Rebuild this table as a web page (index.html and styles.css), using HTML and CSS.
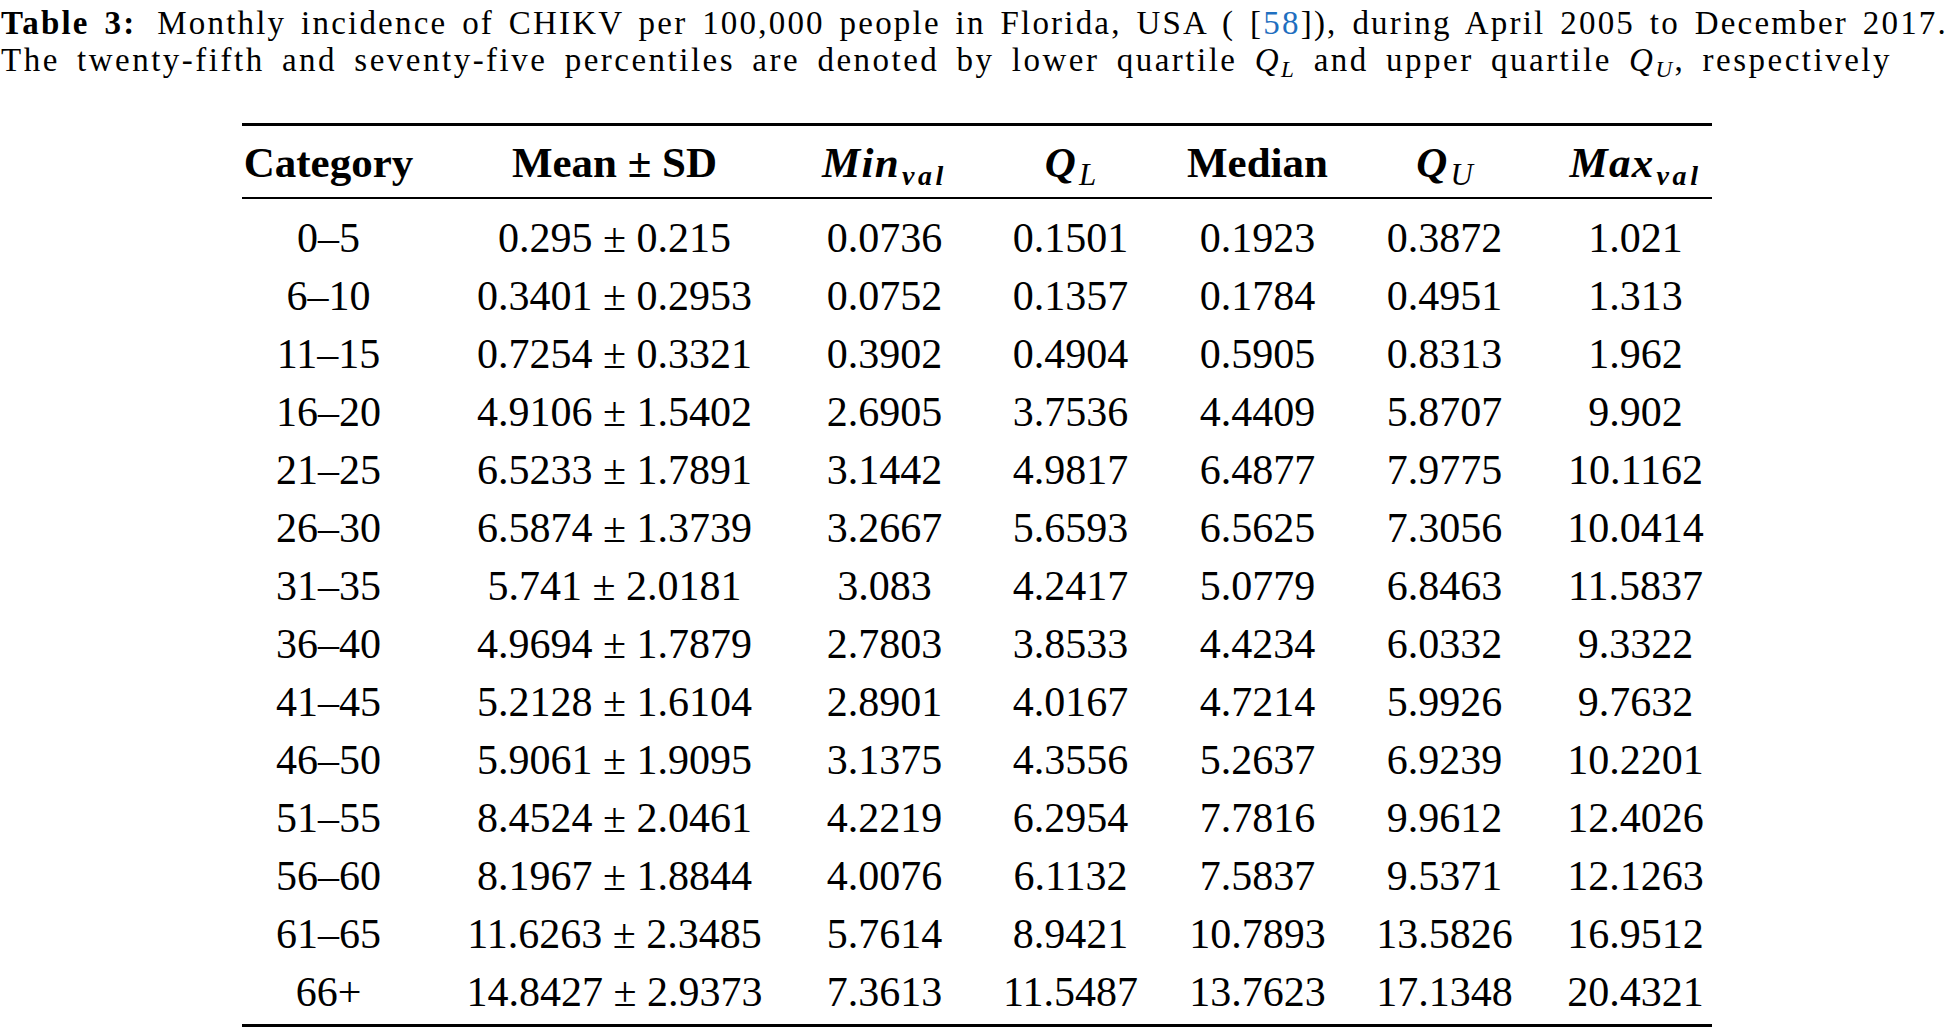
FILE: index.html
```html
<!DOCTYPE html>
<html lang="en">
<head>
<meta charset="utf-8">
<title>Table 3</title>
<link rel="stylesheet" href="styles.css">
</head>
<body>
<div class="caption">
  <div class="caption-line first"><span class="label">Table 3:</span> Monthly incidence of CHIKV per 100,000 people in Florida, USA ( [<span class="cite">58</span>]), during April 2005 to December 2017.</div>
  <div class="caption-line second">The twenty-fifth and seventy-five percentiles are denoted by lower quartile <span class="mi">Q<span class="sub">L</span></span> and upper quartile <span class="mi">Q<span class="sub">U</span></span>, respectively</div>
</div>
<table class="data">
  <colgroup>
    <col class="c-cat"><col class="c-mean"><col class="c-min"><col class="c-ql"><col class="c-med"><col class="c-qu"><col class="c-max">
  </colgroup>
  <thead>
    <tr>
      <th>Category</th>
      <th>Mean ± SD</th>
      <th><span class="mb">Min<span class="sub">val</span></span></th>
      <th><span class="mb">Q<span class="sub sub-reg">L</span></span></th>
      <th>Median</th>
      <th><span class="mb">Q<span class="sub sub-reg">U</span></span></th>
      <th><span class="mb">Max<span class="sub">val</span></span></th>
    </tr>
  </thead>
  <tbody>
    <tr><td>0–5</td><td>0.295 ± 0.215</td><td>0.0736</td><td>0.1501</td><td>0.1923</td><td>0.3872</td><td>1.021</td></tr>
    <tr><td>6–10</td><td>0.3401 ± 0.2953</td><td>0.0752</td><td>0.1357</td><td>0.1784</td><td>0.4951</td><td>1.313</td></tr>
    <tr><td>11–15</td><td>0.7254 ± 0.3321</td><td>0.3902</td><td>0.4904</td><td>0.5905</td><td>0.8313</td><td>1.962</td></tr>
    <tr><td>16–20</td><td>4.9106 ± 1.5402</td><td>2.6905</td><td>3.7536</td><td>4.4409</td><td>5.8707</td><td>9.902</td></tr>
    <tr><td>21–25</td><td>6.5233 ± 1.7891</td><td>3.1442</td><td>4.9817</td><td>6.4877</td><td>7.9775</td><td>10.1162</td></tr>
    <tr><td>26–30</td><td>6.5874 ± 1.3739</td><td>3.2667</td><td>5.6593</td><td>6.5625</td><td>7.3056</td><td>10.0414</td></tr>
    <tr><td>31–35</td><td>5.741 ± 2.0181</td><td>3.083</td><td>4.2417</td><td>5.0779</td><td>6.8463</td><td>11.5837</td></tr>
    <tr><td>36–40</td><td>4.9694 ± 1.7879</td><td>2.7803</td><td>3.8533</td><td>4.4234</td><td>6.0332</td><td>9.3322</td></tr>
    <tr><td>41–45</td><td>5.2128 ± 1.6104</td><td>2.8901</td><td>4.0167</td><td>4.7214</td><td>5.9926</td><td>9.7632</td></tr>
    <tr><td>46–50</td><td>5.9061 ± 1.9095</td><td>3.1375</td><td>4.3556</td><td>5.2637</td><td>6.9239</td><td>10.2201</td></tr>
    <tr><td>51–55</td><td>8.4524 ± 2.0461</td><td>4.2219</td><td>6.2954</td><td>7.7816</td><td>9.9612</td><td>12.4026</td></tr>
    <tr><td>56–60</td><td>8.1967 ± 1.8844</td><td>4.0076</td><td>6.1132</td><td>7.5837</td><td>9.5371</td><td>12.1263</td></tr>
    <tr><td>61–65</td><td>11.6263 ± 2.3485</td><td>5.7614</td><td>8.9421</td><td>10.7893</td><td>13.5826</td><td>16.9512</td></tr>
    <tr><td>66+</td><td>14.8427 ± 2.9373</td><td>7.3613</td><td>11.5487</td><td>13.7623</td><td>17.1348</td><td>20.4321</td></tr>
  </tbody>
</table>
</body>
</html>
```
FILE: styles.css
```css
html, body {
  margin: 0;
  padding: 0;
  background: #ffffff;
  overflow: hidden;
}

body {
  font-family: "Liberation Serif", "Times New Roman", serif;
  color: #000000;
}

.caption {
  padding: 5px 5px 0 1px;
  font-size: 33px;
  line-height: 36.7px;
}

.caption-line.first {
  text-align: justify;
  text-align-last: justify;
  letter-spacing: 2.2px;
}

.caption-line.second {
  text-align: left;
  letter-spacing: 2.5px;
  word-spacing: 6.5px;
}

.label {
  font-weight: bold;
  margin-right: 6px;
}

.cite {
  color: #1f6fc0;
}

.mi {
  font-style: italic;
}

.sub {
  font-size: 0.7em;
  line-height: 0;
  vertical-align: -6px;
}

.data {
  table-layout: fixed;
  width: 1470px;
  margin: 44.6px auto 0;
  border-collapse: separate;
  border-spacing: 0;
}

.c-cat { width: 174px; }
.c-mean { width: 398px; }
.c-min { width: 142px; }
.c-ql { width: 230px; }
.c-med { width: 144px; }
.c-qu { width: 230px; }
.c-max { width: 152px; }

.data th {
  font-size: 43px;
  font-weight: bold;
  line-height: 68px;
  padding: 3px 0 0;
  text-align: center;
  white-space: nowrap;
  border-top: 3px solid #000000;
  border-bottom: 2px solid #000000;
}

.mb {
  font-style: italic;
  font-weight: bold;
  letter-spacing: 0.03em;
}

.mb .sub {
  font-size: 0.65em;
  vertical-align: -8px;
  letter-spacing: 0.13em;
  margin-left: 2px;
}

.mb .sub-reg {
  font-size: 0.72em;
  font-weight: normal;
  letter-spacing: 0;
  margin-left: 2px;
}

.data td {
  font-size: 42px;
  line-height: 58px;
  padding: 0;
  text-align: center;
  white-space: nowrap;
}

.data tbody tr:first-child td {
  padding-top: 10px;
}

.data tbody tr:last-child td {
  padding-bottom: 3px;
  border-bottom: 3px solid #000000;
}
```
